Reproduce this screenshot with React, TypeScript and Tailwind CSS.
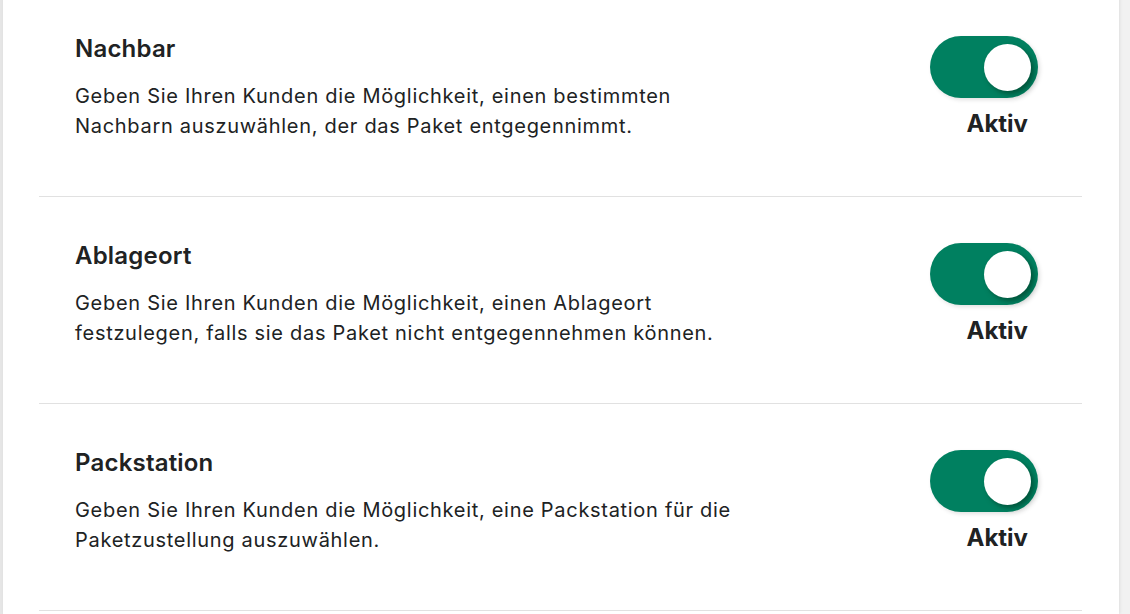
import React from 'react';

const options = [
  {
    title: 'Nachbar',
    lines: [
      'Geben Sie Ihren Kunden die Möglichkeit, einen bestimmten',
      'Nachbarn auszuwählen, der das Paket entgegennimmt.',
    ],
  },
  {
    title: 'Ablageort',
    lines: [
      'Geben Sie Ihren Kunden die Möglichkeit, einen Ablageort',
      'festzulegen, falls sie das Paket nicht entgegennehmen können.',
    ],
  },
  {
    title: 'Packstation',
    lines: [
      'Geben Sie Ihren Kunden die Möglichkeit, eine Packstation für die',
      'Paketzustellung auszuwählen.',
    ],
  },
];

const Toggle = () => (
  <div className="w-[108px] h-[62px] rounded-full bg-[#008060] flex items-center justify-end pr-[7px] shadow-[2px_2px_4px_rgba(0,0,0,0.12)]">
    <div className="w-[47px] h-[47px] rounded-full bg-white shadow-[3px_3px_5px_rgba(0,50,30,0.55)]" />
  </div>
);

const App = () => {
  return (
    <div
      className="w-[1130px] h-[614px] overflow-hidden bg-[#f1f1f1] flex text-[#202223]"
      style={{ fontFamily: 'Inter, "Noto Sans", sans-serif' }}
    >
      <div className="w-[3px] bg-[#e6e6e6]" />
      <div className="w-[1116px] bg-white pl-[36px] pr-[37px] -mt-[10px] shadow-[1px_0_3px_rgba(0,0,0,0.08)]">
        {options.map((option) => (
          <div
            key={option.title}
            className="h-[207px] border-b border-[#e1e1e1] flex justify-between pl-[36px] pr-[44px] pt-[45px]"
          >
            <div>
              <h3 className="text-[24px] leading-[28px] font-semibold tracking-[0.2px]">{option.title}</h3>
              <p className="mt-[18px] text-[20px] leading-[30px] tracking-[0.7px]">
                {option.lines.map((line) => (
                  <span key={line} className="block">
                    {line}
                  </span>
                ))}
              </p>
            </div>
            <div className="flex flex-col items-end pt-[1px]">
              <Toggle />
              <span className="mt-[11px] mr-[10px] text-[24px] leading-[30px] font-bold">Aktiv</span>
            </div>
          </div>
        ))}
      </div>
    </div>
  );
};

export default App;
